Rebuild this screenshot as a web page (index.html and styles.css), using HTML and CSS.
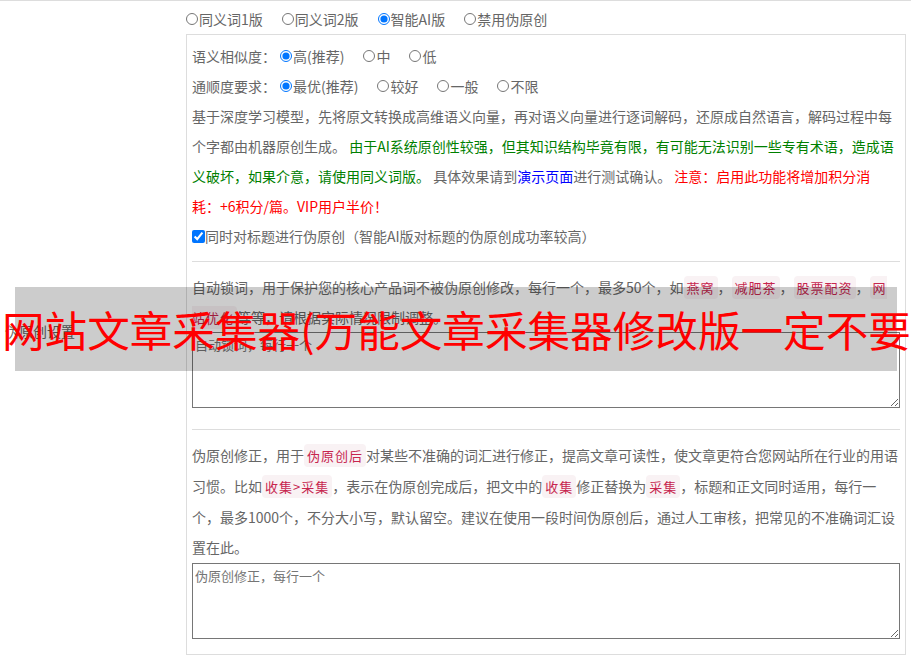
FILE: index.html
```html
<!DOCTYPE html>
<html lang="zh-CN">
<head>
<meta charset="utf-8">
<title>伪原创设置</title>
<link rel="stylesheet" href="styles.css">
</head>
<body>
<div class="form-row">
  <div class="row-label">伪原创设置</div>
  <div class="row-body">
    <div class="mode-row">
      <label class="opt"><input type="radio" name="mode">同义词1版</label>
      <label class="opt"><input type="radio" name="mode">同义词2版</label>
      <label class="opt"><input type="radio" name="mode" checked>智能AI版</label>
      <label class="opt"><input type="radio" name="mode">禁用伪原创</label>
    </div>
    <div class="panel">
      <div class="line">
        <span class="field-name">语义相似度：</span>
        <label class="opt"><input type="radio" name="sim" checked>高(推荐)</label>
        <label class="opt"><input type="radio" name="sim">中</label>
        <label class="opt"><input type="radio" name="sim">低</label>
      </div>
      <div class="line">
        <span class="field-name">通顺度要求：</span>
        <label class="opt"><input type="radio" name="flu" checked>最优(推荐)</label>
        <label class="opt"><input type="radio" name="flu">较好</label>
        <label class="opt"><input type="radio" name="flu">一般</label>
        <label class="opt"><input type="radio" name="flu">不限</label>
      </div>
      <p class="desc desc-intro">基于深度学习模型，先将原文转换成高维语义向量，再对语义向量进行逐词解码，还原成自然语言，解码过程中每个字都由机器原创生成。 <span class="c-green">由于AI系统原创性较强，但其知识结构毕竟有限，有可能无法识别一些专有术语，造成语义破坏，如果介意，请使用同义词版。</span> 具体效果请到<a class="c-blue" href="#">演示页面</a>进行测试确认。 <span class="c-red">注意：启用此功能将增加积分消耗：+6积分/篇。VIP用户半价！</span></p>
      <div class="line">
        <label class="check"><input type="checkbox" checked>同时对标题进行伪原创（智能AI版对标题的伪原创成功率较高）</label>
      </div>
      <div class="sep"></div>
      <p class="desc">自动锁词，用于保护您的核心产品词不被伪原创修改，每行一个，最多50个，如<code class="kw">燕窝</code>，<code class="kw">减肥茶</code>，<code class="kw">股票配资</code>，<code class="kw">网站优化</code>等等，请根据实际情况限制调整。</p>
      <textarea class="box-input" placeholder="自动锁词，每行一个"></textarea>
      <div class="sep sep-wide"></div>
      <p class="desc desc-tall">伪原创修正，用于<code class="kw">伪原创后</code>对某些不准确的词汇进行修正，提高文章可读性，使文章更符合您网站所在行业的用语习惯。比如<code class="kw">收集&gt;采集</code>，表示在伪原创完成后，把文中的<code class="kw">收集</code>修正替换为<code class="kw">采集</code>，标题和正文同时适用，每行一个，最多1000个，不分大小写，默认留空。建议在使用一段时间伪原创后，通过人工审核，把常见的不准确词汇设置在此。</p>
      <textarea class="box-input" placeholder="伪原创修正，每行一个"></textarea>
    </div>
  </div>
</div>
<div class="banner"></div>
<div class="banner-text">网站文章采集器(万能文章采集器修改版一定不要</div>
</body>
</html>
```
FILE: styles.css
```css
html, body {
  margin: 0;
  padding: 0;
  overflow: hidden;
  background: #fff;
}
body {
  font-family: "Noto Sans CJK SC", "Microsoft YaHei", sans-serif;
  font-size: 14px;
  color: #666;
  width: 911px;
  height: 658px;
  position: relative;
}
.form-row {
  display: flex;
  align-items: stretch;
  border-top: 1px solid #ddd;
}
.row-label {
  width: 182px;
  box-sizing: border-box;
  padding-left: 5px;
  display: flex;
  align-items: center;
  color: #666;
}
.row-body {
  width: 724px;
  padding: 3px 0 5px 0;
}
.mode-row {
  height: 30px;
  display: flex;
  align-items: center;
  padding-left: 4px;
}
.opt {
  display: inline-flex;
  align-items: center;
  margin-right: 15px;
  line-height: 30px;
}
.opt input {
  width: 12px;
  height: 12px;
  margin: 0 1px 0 4px;
}
.mode-row .opt:first-child input {
  margin-left: 0;
}
.panel {
  margin-left: 4px;
  width: 720px;
  box-sizing: border-box;
  border: 1px solid #ddd;
  padding: 6px 5px 15px 5px;
}
.line {
  height: 30px;
  display: flex;
  align-items: center;
}
.field-name {
  line-height: 30px;
}
.check {
  display: inline-flex;
  align-items: center;
}
.check input {
  width: 13px;
  height: 13px;
  margin: 0;
}
.desc {
  margin: 0;
  line-height: 30px;
}
.desc-intro {
  margin-right: 6px;
}
.desc-tall {
  line-height: 30.75px;
}
.c-green { color: #008000; }
.c-blue { color: #0000ff; text-decoration: none; }
.c-red { color: #ff0000; }
.kw {
  font-family: "Noto Sans CJK SC", sans-serif;
  font-size: 13px;
  line-height: 1;
  letter-spacing: 1px;
  color: #c7254e;
  background: #f9f2f4;
  border-radius: 4px;
  padding: 2px 3px;
}
.sep {
  border-top: 1px solid #ddd;
  margin: 10px 0;
}
.sep-wide {
  margin-top: 21px;
}
.box-input {
  display: block;
  width: 100%;
  height: 76px;
  box-sizing: border-box;
  margin: 0;
  padding: 2px;
  border: 1px solid #767676;
  font-family: "Noto Sans CJK SC", sans-serif;
  font-size: 13px;
  color: #333;
}
.box-input::placeholder {
  color: #757575;
}
.banner {
  position: absolute;
  left: 15px;
  top: 287px;
  width: 882px;
  height: 84px;
  background: rgba(0, 0, 0, 0.2);
}
.banner-text {
  position: absolute;
  left: 2px;
  top: 287px;
  height: 84px;
  line-height: 84px;
  font-size: 42.6px;
  color: #ff0000;
  white-space: nowrap;
}
```
